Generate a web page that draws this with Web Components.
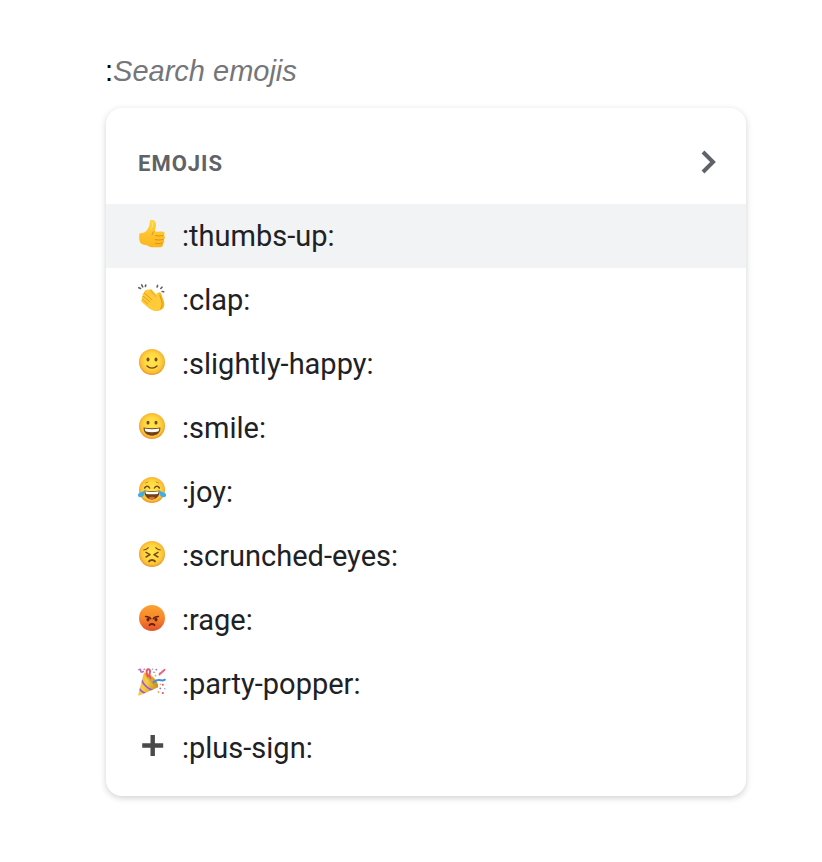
<!DOCTYPE html>
<html lang="en">
<head>
<meta charset="utf-8">
<meta name="viewport" content="width=device-width, initial-scale=1">
<title>Emojis</title>
<style>
  body {
    margin: 0;
    background: #fff;
    font-family: Roboto, "Liberation Sans", sans-serif;
    color: #202124;
  }
</style>
</head>
<body>
<emoji-picker>
  <emoji-search slot="search" placeholder="Search emojis"></emoji-search>
  <emoji-menu>
    <span slot="title">EMOJIS</span>
    <emoji-item icon="thumbs" active>:thumbs-up:</emoji-item>
    <emoji-item icon="clap">:clap:</emoji-item>
    <emoji-item icon="happy">:slightly-happy:</emoji-item>
    <emoji-item icon="smile">:smile:</emoji-item>
    <emoji-item icon="joy">:joy:</emoji-item>
    <emoji-item icon="scrunched">:scrunched-eyes:</emoji-item>
    <emoji-item icon="rage">:rage:</emoji-item>
    <emoji-item icon="party">:party-popper:</emoji-item>
    <emoji-item icon="plus">:plus-sign:</emoji-item>
  </emoji-menu>
</emoji-picker>

<script>
// yellow face shared by most of the emojis
const face = `
  <defs>
    <radialGradient id="face" cx=".5" cy=".47" r=".54">
      <stop offset="0" stop-color="#ffe64b"/>
      <stop offset=".55" stop-color="#fed843"/>
      <stop offset=".82" stop-color="#fbbd34"/>
      <stop offset="1" stop-color="#e58d25"/>
    </radialGradient>
  </defs>
  <circle cx="22" cy="22" r="13" fill="url(#face)"/>`;

const icons = {
  thumbs: `
    <defs>
      <linearGradient id="hand" x1="0" y1="0" x2="0" y2="1">
        <stop offset="0" stop-color="#ffd43d"/>
        <stop offset="1" stop-color="#fbb51f"/>
      </linearGradient>
    </defs>
    <path fill="url(#hand)" d="M9.200 24.200c-.5-2 .4-3 2.200-3.200 3-.3 4.600-1.200 6-3.500 1.500-2.400 2.300-4.200 2.300-6.800 0-1.900.8-3 2.100-3 2.800 0 4.200 2.200 4.200 5 0 2.500-.8 4.600-1.200 7l7.200-.3c2 0 2.800 1 2.700 2.300-.1.900-.6 1.500-1.200 1.800 1 .4 1.500 1.100 1.500 2.100s-.7 1.800-1.500 2.100c.6.500.9 1.100.8 1.900-.1 1-.7 1.700-1.600 2 .4.500.5 1 .3 1.700-.4 1.500-1.600 2-3.400 2-4.300.1-7.900.2-10.500-.9-1.800-.8-3.200-1.600-5-1.700-2.900-.2-4.300-2.300-4.800-5z"/>
    <g fill="none" stroke="#dd8b14" stroke-width=".9" stroke-linecap="round">
      <path d="M25.500 23.600c2.500.6 5 .4 7.800-.1M25.300 27.600c2.500.6 5 .4 8-.1M25.300 31.300c2.300.6 4.500.4 7-.1"/>
      <path d="M24.100 19.700c-1.200.5-2 1.500-1.900 2.900"/>
    </g>
    <path d="M22 9.500c1.200 2 .8 4.800-.7 8" fill="none" stroke="#ffe36a" stroke-width="1" stroke-linecap="round"/>`,
  clap: `
    <g fill="none" stroke="#5d6064" stroke-width="1.600" stroke-linecap="round">
      <path d="M8.800 11.700l1.800.8M11.700 8.900l1 2M15.700 9l-.3 1.500M27.600 9.400l-.5 1.600M32 11.200l-1.200 1.300M33.700 15.800l-1.600-.3"/>
    </g>
    <path fill="#f7b825" d="M19 14.300c1-1.500 2.500-1 3.400.2l5 5.800c.8-1.600.1-2.600.9-3.500 1.100-1.200 2.600-.3 3 1.300l2.200 6.100c1.600 4 1.100 7.800-2.200 9.600-4 2.200-9.200 1-12.700-2.600L12.400 26z"/>
    <path fill="#ffcb38" d="M16.300 14.300c1.200-1.400 2.600-.5 3.500.5l6 7c.6-1.800.1-4.200 1.400-4.700 1.500-.6 2.200.9 2.700 2.500l1.600 5.600c1.200 4.200.2 7.200-2.800 8.700-3.800 1.900-8.400-.3-11.300-3l-5.600-5c-1.300-1.200-.6-2.800.8-2.700-1.600-1.400-.9-3.200.5-3.200-1.200-1.500-.4-3 1-2.900-.4-1.500.9-3.300 2.200-2.800z"/>
    <path fill="none" stroke="#d98b18" stroke-width=".8" stroke-linecap="round" d="M12.600 23.200l5 4.700M13.200 20.100l6.700 5.900M14.300 17l7.700 7M29.900 19.600l1.700 5.500c.9 3.300.4 5.500-.9 7.200"/>`,
  happy: face + `
    <g fill="#79451a"><ellipse cx="18" cy="19.500" rx="1.500" ry="2.100"/><ellipse cx="26" cy="19.500" rx="1.500" ry="2.100"/></g>
    <path d="M17 26c3 2.700 7 2.700 10 0" fill="none" stroke="#79451a" stroke-width="1.500" stroke-linecap="round"/>`,
  smile: face + `
    <g fill="#79451a"><ellipse cx="18" cy="18.700" rx="1.500" ry="1.900"/><ellipse cx="26" cy="18.700" rx="1.500" ry="1.900"/></g>
    <path d="M13.600 23.500c5 1 11.800 1 16.800 0 .4 5-3.500 8.200-8.400 8.200s-8.800-3.200-8.400-8.200z" fill="#71401d"/>
    <path d="M14.700 24.500c4.700.9 9.900.9 14.600 0 0 1.500-.5 2.400-1.200 3.100-3.900.7-8.300.7-12.200 0-.7-.7-1.200-1.600-1.200-3.100z" fill="#fff"/>`,
  joy: face + `
    <g fill="none" stroke="#79451a" stroke-width="1.500" stroke-linecap="round" stroke-linejoin="round">
      <path d="M14.600 20c1.500-2.300 3.700-2.300 5 0M24.400 20c1.300-2.300 3.500-2.300 5 0"/>
      <path d="M15.500 14.900l2.500-.9M26 14l2.500.9" stroke="#c77d20" stroke-width=".8"/>
    </g>
    <path d="M14.400 22.600c5 1 10.200 1 15.200 0 .4 5-2.700 8.800-7.600 8.800s-8-3.800-7.600-8.800z" fill="#71401d"/>
    <path d="M15.300 23.300c4.500.8 8.900.8 13.400 0-.1 1.200-.4 2-.9 2.600-3.900.6-7.700.6-11.600 0-.5-.6-.8-1.400-.9-2.600z" fill="#fff"/>
    <path d="M18.500 30.200c1.500-2 5.500-2 7 0-2 1.500-5 1.500-7 0z" fill="#df6b38"/>
    <path d="M14.600 22.400c.5 3.200-.8 6.300-3.700 6.900-2.200.4-3.700-1.400-2.700-3.200 1-1.900 4-2 6.400-3.700zM29.400 22.400c-.5 3.200.8 6.300 3.700 6.900 2.200.4 3.700-1.400 2.700-3.200-1-1.900-4-2-6.400-3.700z" fill="#3cafe8"/>`,
  scrunched: face + `
    <g fill="none" stroke="#79451a" stroke-width="1.500" stroke-linecap="round" stroke-linejoin="round">
      <path d="M16 20.400l4 2.300-4 2.300M28 20.400l-4 2.300 4 2.300"/>
      <path d="M19 29.300c1.600-1.900 4.400-1.900 6 0" stroke-width="2"/>
      <path d="M13.700 18c2-.2 3.500-.9 4.600-2.300M30.300 18c-2-.2-3.500-.9-4.600-2.300" stroke-width="1.100"/>
    </g>`,
  rage: `
    <defs>
      <linearGradient id="red" x1="0" y1="0" x2="0" y2="1">
        <stop offset="0" stop-color="#fba12f"/>
        <stop offset=".5" stop-color="#f7872c"/>
        <stop offset="1" stop-color="#e4502a"/>
      </linearGradient>
    </defs>
    <circle cx="22" cy="22" r="13" fill="url(#red)"/>
    <g fill="none" stroke="#63220f" stroke-width="1.400" stroke-linecap="round">
      <path d="M15.500 20.500c2.500 0 4.400.6 5.300 2.300M28.500 20.500c-2.500 0-4.400.6-5.300 2.300"/>
      <path d="M19.500 29.100c1.300-1.400 3.700-1.400 5 0" stroke-width="1.900"/>
    </g>
    <g fill="#63220f"><ellipse cx="18" cy="23.600" rx="1.500" ry="1.900"/><ellipse cx="26" cy="23.600" rx="1.500" ry="1.900"/></g>`,
  party: `
    <defs>
      <linearGradient id="cone" x1="0" y1="0" x2="1" y2=".6">
        <stop offset="0" stop-color="#ecb32f"/>
        <stop offset=".5" stop-color="#f7cd4a"/>
        <stop offset="1" stop-color="#c98a1f"/>
      </linearGradient>
      <clipPath id="body"><path d="M14 12.500c3.800.2 7.500 2.300 10.200 5.700 2.700 3.300 4.500 6.800 4 9L9.500 35.600c-1 .3-1.600-.3-1.300-1.200z"/></clipPath>
    </defs>
    <g clip-path="url(#body)">
      <path d="M8 12h21v24H8z" fill="url(#cone)"/>
      <path d="M11.200 19.500c2.500 5.500 6.500 9.500 12.500 11.200M8.500 27c1.500 4 4 5.500 8.500 7" fill="none" stroke="#9c5bcb" stroke-width="1.800"/>
    </g>
    <path d="M14.500 13.500c2 5.600 7.500 11.500 13.500 13.200.6-2.500-1.300-5.500-3.800-8.500-2.700-3.100-6-4.700-9.700-4.700z" fill="#bf861e" opacity=".4"/>
    <g fill="none" stroke-linecap="round" stroke-width="2">
      <path d="M18 16.500c-2-3.500-1.700-7 .3-7.200 1.900-.1 2 2 1.400 3.800-.5 1.900-.3 3.500.8 5.200" stroke="#e9536c"/>
      <path d="M23.500 22.300c2.300-2.200 5-2.500 7.400-2 1.500.3 2.700.2 4-.6" stroke="#458bdd"/>
      <path d="M29.600 14.500c-.2-2 2.200-1 2.500-2.500s2.200-.5 2.300-2.200" stroke="#e5667a"/>
      <path d="M9 9.700c1.200-.8 2-.2 1.700 1.200-.2 1.300 1.200 1.500 2.500.6" stroke="#b476c8" stroke-width="1.700"/>
    </g>
    <g fill="#dc5568"><circle cx="14.200" cy="9.200" r=".8"/><circle cx="24" cy="12.300" r=".8"/><circle cx="32.800" cy="24.800" r="1"/><circle cx="32.800" cy="33" r="1.100"/></g>
    <g fill="#9b6fd4"><circle cx="26.300" cy="9.600" r=".9"/><circle cx="30.300" cy="28.400" r=".9"/></g>
    <g fill="#eba63c"><circle cx="25.500" cy="15.600" r=".9"/><circle cx="30.300" cy="24.200" r=".8"/><circle cx="28.500" cy="32" r=".9"/></g>
    <g fill="#6eb7df"><circle cx="22.500" cy="9.200" r=".8"/><circle cx="34.800" cy="28.800" r=".8"/></g>`,
  plus: `<path fill="#4a4a4a" d="M20.500 11h4.400v8.200h8.300v4.600h-8.300V32h-4.400v-8.200h-8.300v-4.600h8.300z"/>`
};

class EmojiPicker extends HTMLElement {
  constructor() {
    super();
    this.attachShadow({ mode: "open" });
  }
  connectedCallback() {
    this.shadowRoot.innerHTML = `
      <style>
        :host {
          display: block;
          padding: 48px 76px 64px 106px;
        }
        ::slotted(emoji-search) {
          margin: 0 0 14px -1px;
        }
      </style>
      <slot name="search"></slot>
      <slot></slot>
    `;
  }
}

class EmojiSearch extends HTMLElement {
  constructor() {
    super();
    this.attachShadow({ mode: "open" });
  }
  connectedCallback() {
    const text = this.getAttribute("placeholder");
    this.shadowRoot.innerHTML = `
      <style>
        :host {
          display: flex;
          align-items: center;
          height: 46px;
          font: 29px/46px "Liberation Sans", Arial, sans-serif;
          color: #000;
        }
        input {
          flex: 1;
          min-width: 0;
          height: 46px;
          padding: 0;
          border: 0;
          outline: 0;
          background: none;
          font: inherit;
          color: inherit;
        }
        input::placeholder {
          color: #747679;
          font-style: italic;
          opacity: 1;
        }
      </style>
      <label for="query">:</label>
      <input id="query" type="text" placeholder="${text}" aria-label="${text}" autocomplete="off">
    `;
  }
}

class EmojiMenu extends HTMLElement {
  constructor() {
    super();
    this.attachShadow({ mode: "open" });
  }
  connectedCallback() {
    this.shadowRoot.innerHTML = `
      <style>
        :host {
          display: block;
          padding-bottom: 16px;
          border-radius: 16px;
          background: #fff;
          box-shadow: 0 2px 6px rgba(60, 64, 67, .24);
        }
        header {
          display: flex;
          align-items: center;
          justify-content: space-between;
          height: 96px;
          padding: 16px 24px 0 32px;
          box-sizing: border-box;
        }
        h2 {
          margin: 0;
          font-size: 22px;
          line-height: 32px;
          font-weight: 700;
          letter-spacing: 1px;
          color: #5f6368;
        }
        button {
          display: flex;
          padding: 0;
          border: 0;
          background: none;
          color: #5f6368;
          cursor: pointer;
        }
      </style>
      <header>
        <h2><slot name="title"></slot></h2>
        <button type="button" aria-label="More emojis">
          <svg width="28" height="28" viewBox="0 0 28 28" fill="none" stroke="currentColor" stroke-width="4">
            <path d="M9 2L19 12 9 22"/>
          </svg>
        </button>
      </header>
      <slot></slot>
    `;
  }
}

class EmojiItem extends HTMLElement {
  constructor() {
    super();
    this.attachShadow({ mode: "open" });
  }
  connectedCallback() {
    this.shadowRoot.innerHTML = `
      <style>
        :host {
          display: block;
        }
        button {
          display: flex;
          align-items: center;
          gap: 16px;
          width: 100%;
          height: 64px;
          padding: 0 32px;
          border: 0;
          background: none;
          font: inherit;
          font-size: 29px;
          line-height: 40px;
          color: inherit;
          text-align: left;
          cursor: pointer;
        }
        button:hover, :host([active]) button {
          background: #f1f3f4;
        }
        svg {
          flex: none;
          overflow: visible;
        }
      </style>
      <button type="button">
        <svg width="28" height="28" viewBox="8 10 28 28" aria-hidden="true">${icons[this.getAttribute("icon")]}</svg>
        <span><slot></slot></span>
      </button>
    `;
  }
}

customElements.define("emoji-picker", EmojiPicker);
customElements.define("emoji-search", EmojiSearch);
customElements.define("emoji-menu", EmojiMenu);
customElements.define("emoji-item", EmojiItem);
</script>
</body>
</html>
